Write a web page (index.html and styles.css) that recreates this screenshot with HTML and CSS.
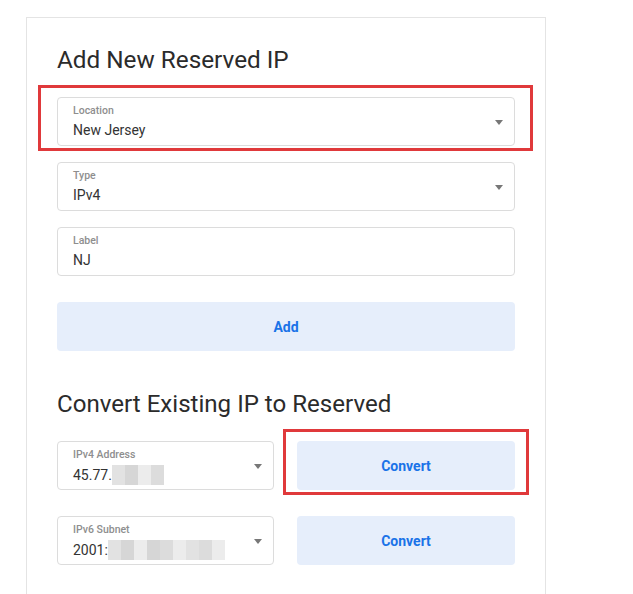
FILE: index.html
```html
<!DOCTYPE html>
<html>
<head>
<meta charset="utf-8">
<link rel="stylesheet" href="styles.css">
</head>
<body>
<div class="card">
  <h2 class="title">Add New Reserved IP</h2>
  <div class="stack">
    <div class="field select">
      <span class="lbl">Location</span>
      <span class="val">New Jersey</span>
      <span class="caret"></span>
      <span class="mark mark-loc"></span>
    </div>
    <div class="field select">
      <span class="lbl">Type</span>
      <span class="val">IPv4</span>
      <span class="caret"></span>
    </div>
    <div class="field">
      <span class="lbl">Label</span>
      <span class="val">NJ</span>
    </div>
  </div>
  <button class="btn btn-add">Add</button>

  <h2 class="title title-2">Convert Existing IP to Reserved</h2>
  <div class="grid">
    <div class="field select">
      <span class="lbl">IPv4 Address</span>
      <span class="val">45.77.<span class="blur"><i class="b1"></i><i class="b2"></i><i class="b3"></i><i class="b4"></i></span></span>
      <span class="caret"></span>
    </div>
    <div class="btn-wrap">
      <button class="btn">Convert</button>
      <span class="mark mark-conv"></span>
    </div>
    <div class="field select">
      <span class="lbl">IPv6 Subnet</span>
      <span class="val">2001:<span class="blur"><i class="b1"></i><i class="b2"></i><i class="b3"></i><i class="b2"></i><i class="b4"></i><i class="b3"></i><i class="b1"></i><i class="b4"></i><i class="b3"></i></span></span>
      <span class="caret"></span>
    </div>
    <div class="btn-wrap">
      <button class="btn">Convert</button>
    </div>
  </div>
</div>
</body>
</html>
```

FILE: styles.css
```css
html, body {
  margin: 0;
  padding: 0;
  background: #ffffff;
}
body {
  font-family: Roboto, "Liberation Sans", sans-serif;
  color: #2b2b2b;
  padding: 17px 0 0 26px;
}
.card {
  width: 458px;
  height: 576px;
  border: 1px solid #e4e4e4;
  border-bottom: none;
  padding: 0 30px;
}
.title {
  margin: 26px 0 0 0;
  font-size: 24.3px;
  line-height: 32px;
  font-weight: 400;
  color: #2b2b2b;
  letter-spacing: 0;
}
.title-2 {
  margin-top: 37px;
  font-size: 24.1px;
}
.stack {
  display: flex;
  flex-direction: column;
  gap: 16px;
  margin-top: 21px;
}
.field {
  position: relative;
  height: 47px;
  border: 1px solid #dcdcdc;
  border-radius: 4px;
  box-sizing: content-box;
  display: flex;
  flex-direction: column;
  padding: 0 15px;
}
.lbl {
  margin-top: 7px;
  font-size: 10.5px;
  line-height: 12px;
  font-weight: 500;
  color: #8e8e8e;
}
.val {
  margin-top: 4px;
  font-size: 14px;
  line-height: 18px;
  color: #333;
  display: flex;
  align-items: center;
}
.caret {
  position: absolute;
  right: 11px;
  top: 22px;
  width: 0;
  height: 0;
  border-left: 4px solid transparent;
  border-right: 4px solid transparent;
  border-top: 5px solid #777;
}
.mark {
  position: absolute;
  border: 3px solid #e0393b;
  pointer-events: none;
}
.mark-loc {
  left: -20px;
  right: -19px;
  top: -13px;
  bottom: -6px;
}
.btn {
  display: block;
  width: 100%;
  height: 49px;
  border: none;
  border-radius: 4px;
  background: #e6eefb;
  color: #1a73e8;
  font-family: Roboto, "Liberation Sans", sans-serif;
  font-size: 14px;
  font-weight: 700;
  padding: 0;
}
.btn-add {
  margin-top: 26px;
}
.grid {
  margin-top: 21px;
  display: grid;
  grid-template-columns: 217px 1fr;
  column-gap: 23px;
  row-gap: 26px;
}
.grid .field {
  padding-right: 0;
}
.btn-wrap {
  position: relative;
}
.mark-conv {
  left: -14px;
  right: -14px;
  top: -12px;
  bottom: -5px;
}
.blur {
  display: inline-flex;
  height: 20px;
  margin-left: 0;
}
.blur i {
  display: block;
  width: 13px;
  height: 20px;
}
.blur .b1 { background: #e2e2e2; }
.blur .b2 { background: #d6d6d6; }
.blur .b3 { background: #ececec; }
.blur .b4 { background: #dcdcdc; }
```
